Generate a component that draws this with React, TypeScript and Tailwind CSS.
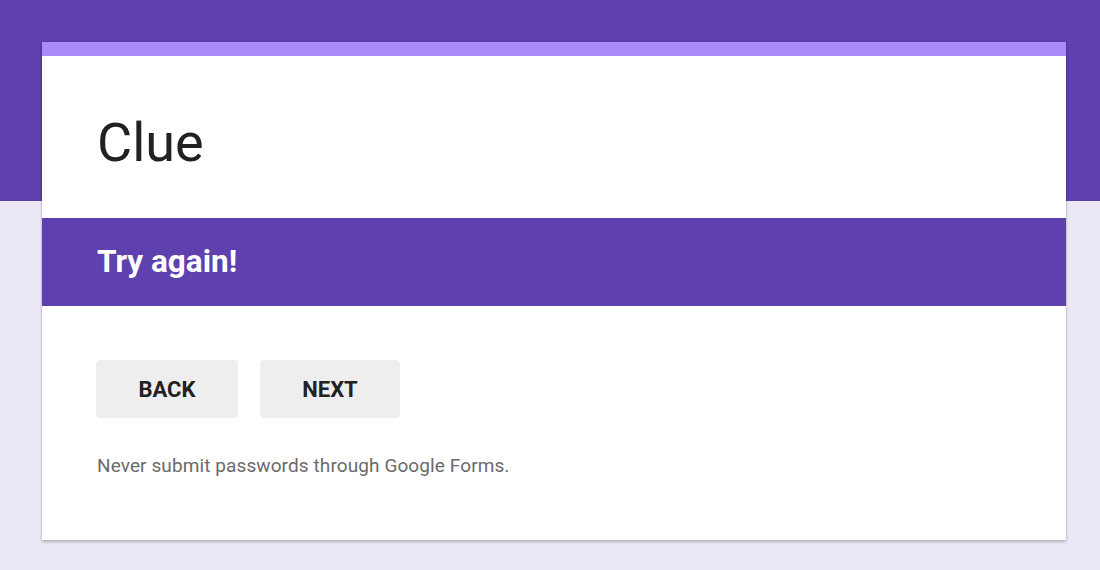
export default function App() {
  return (
    <div
      className="min-h-[570px] w-full bg-[linear-gradient(to_bottom,#5e40ae_0px,#5e40ae_201px,#ede8f6_201px)] pt-[42px] px-[42px]"
      style={{ fontFamily: "Roboto, 'Liberation Sans', sans-serif" }}
    >
      <div className="bg-white w-[1024px] shadow-[0_2px_3px_rgba(0,0,0,0.22),0_0_2px_rgba(0,0,0,0.12)]">
        <div className="h-[14px] bg-[#a98bf8]" />
        <div className="h-[162px] pl-[55px] pt-[55px]">
          <h1 className="text-[54px] leading-[64px] text-[#212121] font-normal">Clue</h1>
        </div>
        <div className="h-[88px] bg-[#5e40ae] pl-[55px] flex items-center">
          <h2 className="text-[31.5px] font-bold text-white">Try again!</h2>
        </div>
        <div className="h-[234px] pl-[54px] pt-[54px]">
          <div className="flex gap-[22px]">
            <button className="w-[142px] h-[58px] rounded-[4px] bg-[#eeeeee] text-[22px] font-bold text-[#212121] flex items-center justify-center">
              BACK
            </button>
            <button className="w-[140px] h-[58px] rounded-[4px] bg-[#eeeeee] text-[22px] font-bold text-[#212121] flex items-center justify-center">
              NEXT
            </button>
          </div>
          <p className="mt-[36px] ml-[1px] text-[19px] leading-[24px] text-[#6a6a6a] tracking-[0.1px]">
            Never submit passwords through Google Forms.
          </p>
        </div>
      </div>
    </div>
  );
}
